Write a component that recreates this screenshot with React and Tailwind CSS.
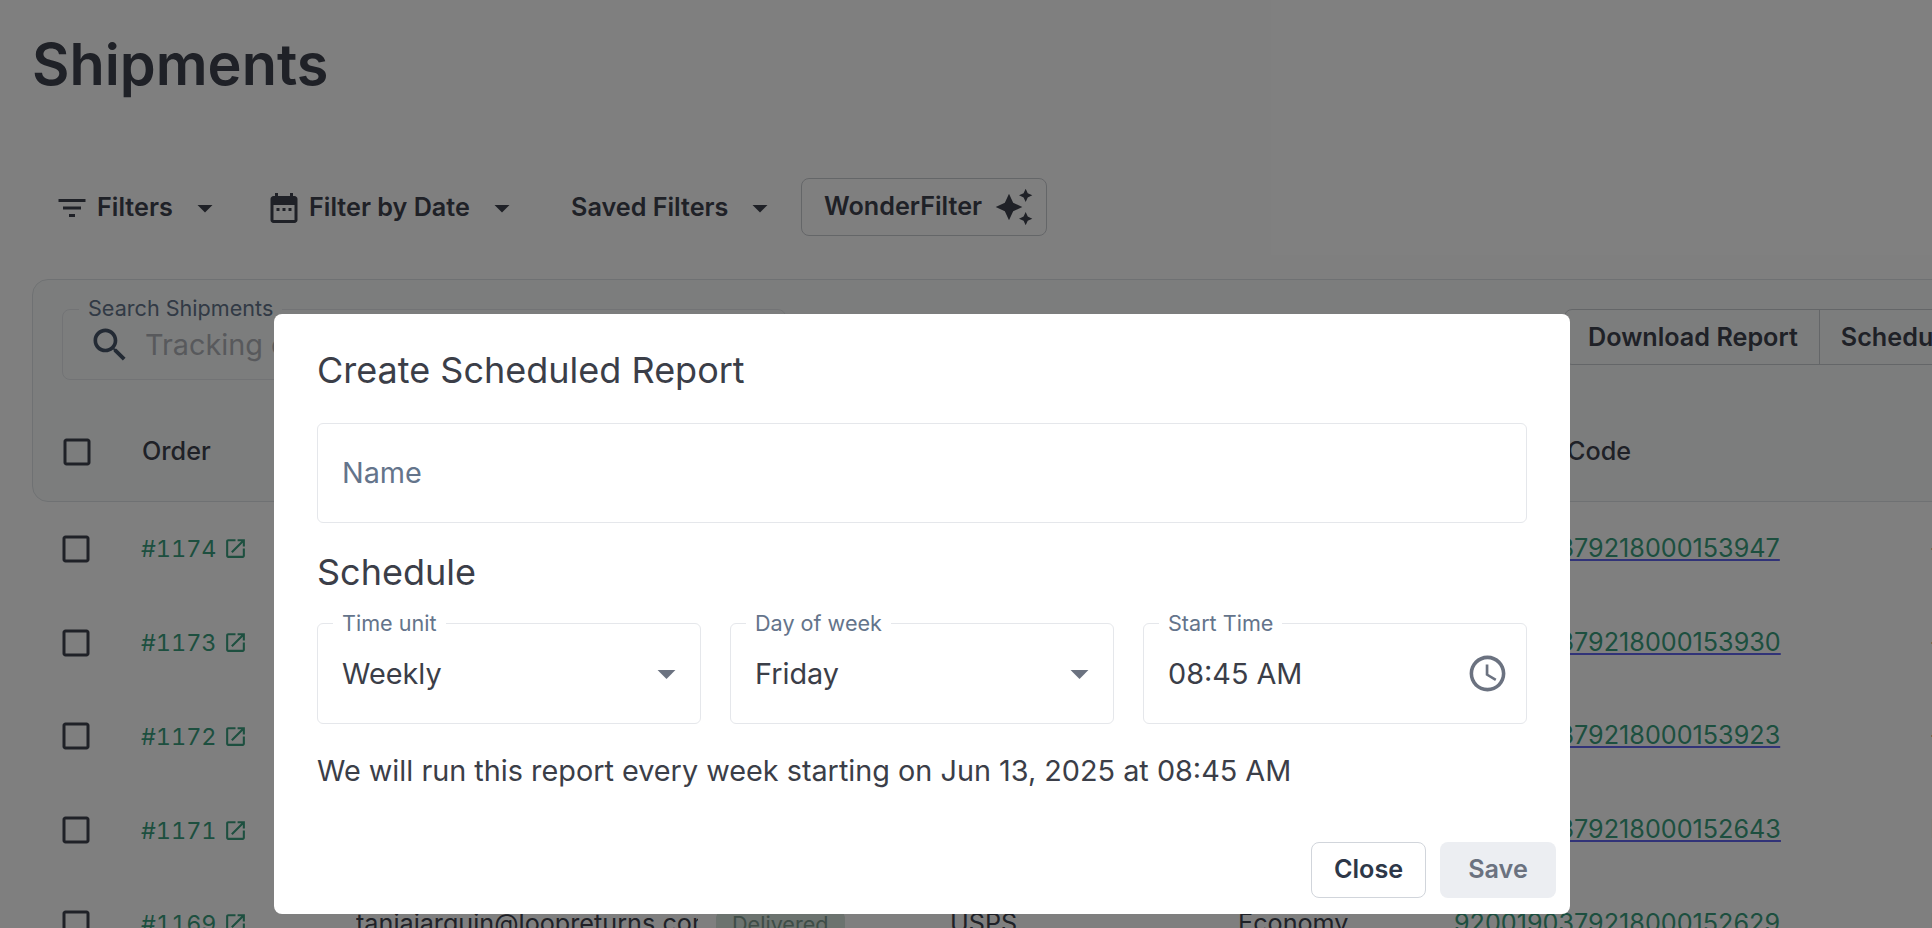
import React from 'react';

const Icon = ({ d, className = '' }) => (
  <svg viewBox="0 0 24 24" fill="currentColor" className={className}>
    <path d={d} />
  </svg>
);

const paths = {
  filter: 'M10 18h4v-2h-4v2zM3 6v2h18V6H3zm3 7h12v-2H6v2z',
  calendar:
    'M19 4h-1V2h-2v2H8V2H6v2H5c-1.11 0-1.99.9-1.99 2L3 20c0 1.1.89 2 2 2h14c1.1 0 2-.9 2-2V6c0-1.1-.9-2-2-2zm0 16H5V10h14v10zM9 14H7v-2h2v2zm4 0h-2v-2h2v2zm4 0h-2v-2h2v2z',
  sparkle:
    'm19 9 1.25-2.75L23 5l-2.75-1.25L19 1l-1.25 2.75L15 5l2.75 1.25L19 9zm-7.5.5L9 4 6.5 9.5 1 12l5.5 2.5L9 20l2.5-5.5L17 12l-5.5-2.5zM19 15l-1.25 2.75L15 19l2.75 1.25L19 23l1.25-2.75L23 19l-2.75-1.25L19 15z',
  search:
    'M15.5 14h-.79l-.28-.27C15.41 12.59 16 11.11 16 9.5 16 5.91 13.09 3 9.5 3S3 5.91 3 9.5 5.91 16 9.5 16c1.61 0 3.09-.59 4.23-1.57l.27.28v.79l5 4.99L20.49 19l-4.99-5zm-6 0C7.01 14 5 11.99 5 9.5S7.01 5 9.5 5 14 7.01 14 9.5 11.99 14 9.5 14z',
  clock:
    'M11.99 2C6.47 2 2 6.48 2 12s4.47 10 9.99 10C17.52 22 22 17.52 22 12S17.52 2 11.99 2zM12 20c-4.42 0-8-3.58-8-8s3.58-8 8-8 8 3.58 8 8-3.58 8-8 8zm.5-13H11v6l5.25 3.15.75-1.23-4.5-2.67z',
  open:
    'M19 19H5V5h7V3H5c-1.11 0-2 .9-2 2v14c0 1.1.89 2 2 2h14c1.1 0 2-.9 2-2v-7h-2v7zM14 3v2h3.59l-9.83 9.83 1.41 1.41L19 6.41V10h2V3h-7z',
  checkbox:
    'M19 5v14H5V5h14m0-2H5c-1.1 0-2 .9-2 2v14c0 1.1.9 2 2 2h14c1.1 0 2-.9 2-2V5c0-1.1-.9-2-2-2z',
  caret: 'M7 10l5 5 5-5z',
};

const rows = [
  { order: '#1174', tracking: '9200190379218000153947', next: '-' },
  { order: '#1173', tracking: '9200190379218000153930', next: '-' },
  { order: '#1172', tracking: '9200190379218000153923', next: '-' },
  { order: '#1171', tracking: '9200190379218000152643', next: 'L', muted: true },
  {
    order: '#1169',
    tracking: '9200190379218000152629',
    email: 'taniajarquin@loopreturns.com',
    status: 'Delivered',
    carrier: 'USPS',
    service: 'Economy',
    next: 'L',
    muted: true,
  },
];

const FilterButton = ({ icon, label, className = '' }) => (
  <div className={`flex items-center text-[25.2px] font-semibold text-[#3f434e] ${className}`}>
    {icon && <Icon d={icon} className="mr-[7px] h-9 w-9" />}
    <span>{label}</span>
    <Icon d={paths.caret} className="ml-[14px] h-9 w-9" />
  </div>
);

const Field = ({ label, value, icon }) => (
  <div className="relative flex h-[101px] flex-1 items-center justify-between rounded-md border border-[#e5e7eb] pr-[12px] pl-[24px]">
    <span className="absolute top-[-14px] left-[15px] bg-white px-[9px] text-[21.6px] leading-[26px] text-[#64748b]">
      {label}
    </span>
    <span className="text-[28.8px] text-[#3b3e48]">{value}</span>
    {icon}
  </div>
);

const App = () => {
  return (
    <div className="relative h-[928px] w-[1932px] overflow-hidden bg-white font-['Inter',sans-serif]">
      {/* page behind the dialog */}
      <div className="pt-[29px] pl-[32px]">
        <h1 className="h-[150px] text-[57.6px] leading-[70px] font-semibold text-[#3f434e]">Shipments</h1>
        <div className="flex h-[58px] items-center">
          <FilterButton icon={paths.filter} label="Filters" className="ml-[22px] w-[212px]" />
          <FilterButton icon={paths.calendar} label="Filter by Date" className="w-[305px]" />
          <FilterButton label="Saved Filters" className="w-[230px]" />
          <div className="mt-[-2px] flex h-[58px] items-center rounded-lg border border-[#c9ccd1] pr-[12px] pl-[22px] text-[25.2px] font-semibold text-[#3f434e]">
            WonderFilter
            <Icon d={paths.sparkle} className="ml-[12px] h-[40px] w-[40px]" />
          </div>
        </div>

        <div className="mt-[42px] w-[2000px] rounded-tl-2xl rounded-bl-2xl border border-[#dfe3e6] bg-[#f8fbfb]">
          <div className="flex h-[123px] items-start pt-[29px] pl-[29px]">
            <div className="relative flex h-[71px] w-[724px] shrink-0 items-center rounded-lg border border-[#e5e7eb] pl-[25px]">
              <span className="absolute top-[-15px] left-[16px] bg-[#f8fbfb] px-[9px] text-[21.6px] leading-[26px] text-[#64748b]">
                Search Shipments
              </span>
              <Icon d={paths.search} className="h-[44px] w-[44px] text-[#475569]" />
              <span className="ml-[13px] text-[28.8px] text-[#b0b3b8]">Tracking or Order</span>
            </div>
            <div className="ml-[778px] flex h-[56px] shrink-0 items-center rounded-lg border border-[#c9ccd1] text-[25.2px] font-semibold whitespace-nowrap text-[#3f434e]">
              <span className="border-r border-[#c9ccd1] pr-[21px] pl-[23px] leading-[54px]">Download Report</span>
              <span className="px-[21px] leading-[54px]">Schedule Report</span>
            </div>
          </div>
          <div className="flex h-[98px] items-center text-[25.2px] font-medium text-[#3f434e]">
            <Icon d={paths.checkbox} className="ml-[26px] h-9 w-9 shrink-0" />
            <span className="ml-[47px] w-[1425px]">Order</span>
            <span>Code</span>
          </div>
        </div>

        {rows.map((row) => (
          <div key={row.order} className="flex h-[93.75px] items-center text-[25.2px]">
            <Icon d={paths.checkbox} className="ml-[26px] h-9 w-9 shrink-0 text-[#3f434e]" />
            <div className="ml-[47px] flex w-[215px] shrink-0 items-center text-[23.4px] text-[#3a9f7f] tabular-nums">
              {row.order}
              <Icon d={paths.open} className="ml-[7px] h-[25px] w-[25px]" />
            </div>
            <div className="w-[342px] shrink-0 overflow-hidden whitespace-nowrap text-[#3f434e]">{row.email}</div>
            <div className="ml-[18px] w-[234px] shrink-0">
              {row.status && (
                <span className="rounded-xl bg-[#d8e6df] px-[16px] py-[4px] text-[21.6px] text-[#7d9a8e]">{row.status}</span>
              )}
            </div>
            <div className="w-[288px] shrink-0 text-[#3f434e]">{row.carrier}</div>
            <div className="w-[216px] shrink-0 text-[#3f434e]">{row.service}</div>
            <div className="w-[476px] shrink-0 text-[#3a9f7f] underline decoration-[#6366f1]">{row.tracking}</div>
            <div className={row.muted ? 'text-[#c4c4c4]' : 'text-[#3f434e]'}>{row.next}</div>
          </div>
        ))}
      </div>

      {/* backdrop */}
      <div className="absolute inset-0 bg-black/50" />

      {/* dialog */}
      <div className="absolute top-[314px] left-[274px] flex h-[600px] w-[1296px] flex-col rounded-lg bg-white">
        <div className="flex-1 px-[43px] pt-[31px]">
          <h2 className="text-[36px] leading-[50px] text-[#3b3e48]">Create Scheduled Report</h2>
          <div className="mt-[28px] flex h-[100px] items-center rounded-md border border-[#e5e7eb] px-[24px] text-[28.8px] text-[#64748b]">
            Name
          </div>
          <h3 className="mt-[24px] text-[36px] leading-[50px] text-[#3b3e48]">Schedule</h3>
          <div className="mt-[26px] flex gap-[29px]">
            <Field
              label="Time unit"
              value="Weekly"
              icon={<Icon d={paths.caret} className="h-[43px] w-[43px] text-[#6b7280]" />}
            />
            <Field
              label="Day of week"
              value="Friday"
              icon={<Icon d={paths.caret} className="h-[43px] w-[43px] text-[#6b7280]" />}
            />
            <Field
              label="Start Time"
              value="08:45 AM"
              icon={<Icon d={paths.clock} className="mr-[5px] h-[43px] w-[43px] text-[#6b7280]" />}
            />
          </div>
          <p className="mt-[26px] text-[28.8px] leading-[42px] text-[#3b3e48]">
            We will run this report every week starting on Jun 13, 2025 at 08:45 AM
          </p>
        </div>
        <div className="flex justify-end gap-[14px] pr-[14px] pb-[16px]">
          <button className="h-[56px] w-[115px] rounded-lg border border-[#d1d5db] bg-white text-[25.2px] font-semibold text-[#2d3748]">
            Close
          </button>
          <button className="h-[56px] w-[116px] rounded-lg bg-[#eceef2] text-[25.2px] font-semibold text-[#6b7280]">
            Save
          </button>
        </div>
      </div>
    </div>
  );
};

export default App;
